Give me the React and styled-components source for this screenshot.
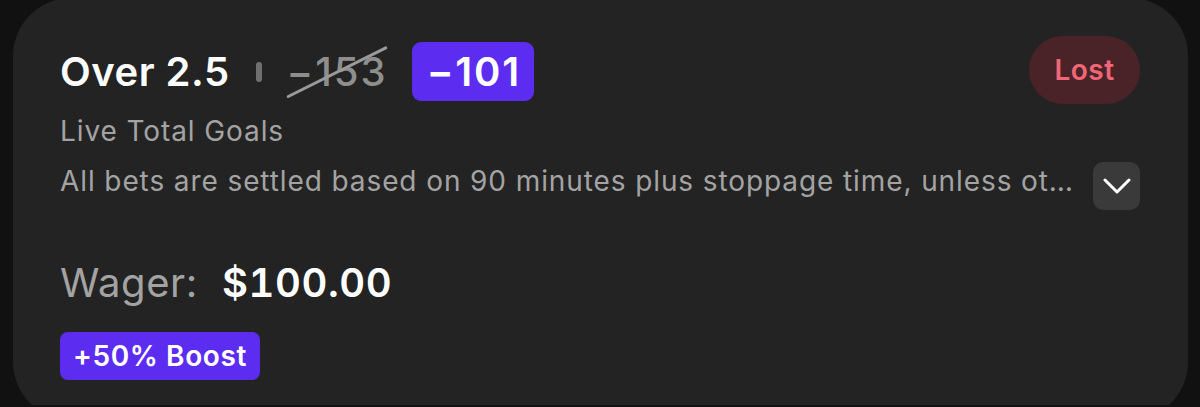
import React from 'react';
import styled, { createGlobalStyle } from 'styled-components';

const GlobalStyle = createGlobalStyle`
  html, body {
    margin: 0;
    padding: 0;
    background: #111111;
    overflow: hidden;
  }
  body {
    font-family: Inter, 'Noto Sans', sans-serif;
    -webkit-font-smoothing: antialiased;
  }
`;

const Page = styled.div`
  height: 407px;
  padding: 0 12px 0 13px;
`;

const Card = styled.div`
  box-sizing: border-box;
  margin-top: -2px;
  height: 422px;
  background: #232323;
  border-radius: 58px;
  padding: 38px 48px 0 47px;
  display: flex;
  flex-direction: column;
`;

const Header = styled.div`
  display: flex;
  justify-content: space-between;
  align-items: flex-start;
`;

const TitleLine = styled.div`
  display: flex;
  align-items: center;
  margin-top: 6px;
  height: 59px;
`;

const Title = styled.span`
  font-size: 40px;
  font-weight: 600;
  letter-spacing: 0.5px;
  color: #ffffff;
  line-height: 59px;
`;

const Divider = styled.span`
  width: 6px;
  height: 20px;
  margin: 0 25px 0 26px;
  border-radius: 3px;
  background: #6f6f6f;
`;

const OldOdds = styled.span`
  position: relative;
  margin-right: 24px;
  font-size: 40px;
  font-weight: 500;
  letter-spacing: 2px;
  color: #8e8e8e;
  line-height: 59px;

  &::after {
    content: '';
    position: absolute;
    left: 50%;
    top: 50%;
    width: 112px;
    height: 3px;
    border-radius: 2px;
    background: #9a9a9a;
    transform: translate(-50%, -45%) rotate(-26.5deg);
  }
`;

const OddsBadge = styled.span`
  display: inline-block;
  height: 59px;
  padding: 0 13px 0 15px;
  border-radius: 9px;
  background: #5c2cf0;
  color: #ffffff;
  font-size: 40px;
  font-weight: 600;
  letter-spacing: 1.8px;
  line-height: 59px;
`;

const StatusPill = styled.span`
  display: flex;
  align-items: center;
  justify-content: center;
  width: 111px;
  height: 68px;
  border-radius: 34px;
  background: ${(p) => (p.$lost ? '#4a2328' : '#1f3d2a')};
  color: ${(p) => (p.$lost ? '#ef6677' : '#4ade80')};
  font-size: 28px;
  font-weight: 600;
  letter-spacing: 0.5px;
`;

const Market = styled.div`
  margin-top: 10px;
  font-size: 28px;
  letter-spacing: 0.9px;
  line-height: 34px;
  color: #a3a3a3;
`;

const RulesRow = styled.div`
  display: flex;
  align-items: flex-start;
  gap: 16px;
  margin-top: 14px;
`;

const Rules = styled.div`
  flex: 1;
  min-width: 0;
  margin-top: 2px;
  font-size: 28px;
  letter-spacing: 0.9px;
  line-height: 34px;
  color: #a3a3a3;
  white-space: nowrap;
  overflow: hidden;
  text-overflow: ellipsis;
`;

const ExpandButton = styled.button`
  flex: none;
  width: 47px;
  height: 48px;
  border: none;
  border-radius: 10px;
  background: #3a3a3a;
  display: flex;
  align-items: center;
  justify-content: center;
  padding: 0;
`;

const WagerLine = styled.div`
  display: flex;
  align-items: baseline;
  gap: 24px;
  margin-top: 49px;
  font-size: 40px;
  line-height: 48px;
`;

const WagerLabel = styled.span`
  color: #a3a3a3;
  font-weight: 400;
  letter-spacing: 0.6px;
`;

const WagerAmount = styled.span`
  color: #ffffff;
  font-weight: 600;
  font-variant-numeric: tabular-nums;
  letter-spacing: 0.6px;
`;

const BoostTag = styled.span`
  align-self: flex-start;
  margin-top: 25px;
  height: 48px;
  padding: 0 13px;
  border-radius: 8px;
  background: #5c2cf0;
  color: #ffffff;
  font-size: 28px;
  font-weight: 600;
  letter-spacing: 0.6px;
  line-height: 48px;
`;

const Chevron = () => (
  <svg width="28" height="16" viewBox="0 0 28 16" fill="none">
    <path
      d="M2 2 L14 14 L26 2"
      stroke="#ffffff"
      strokeWidth="3"
      strokeLinecap="round"
      strokeLinejoin="round"
    />
  </svg>
);

const bet = {
  selection: 'Over 2.5',
  oldOdds: '\u2212153',
  odds: '\u2212101',
  market: 'Live Total Goals',
  rules:
    'All bets are settled based on 90 minutes plus stoppage time, unless otherwise stated.',
  wager: '$100.00',
  boost: '+50% Boost',
  status: 'Lost',
};

export default function App() {
  return (
    <>
      <GlobalStyle />
      <Page>
        <Card>
          <Header>
            <TitleLine>
              <Title>{bet.selection}</Title>
              <Divider />
              <OldOdds>{bet.oldOdds}</OldOdds>
              <OddsBadge>{bet.odds}</OddsBadge>
            </TitleLine>
            <StatusPill $lost={bet.status === 'Lost'}>{bet.status}</StatusPill>
          </Header>
          <Market>{bet.market}</Market>
          <RulesRow>
            <Rules>{bet.rules}</Rules>
            <ExpandButton aria-label="Expand">
              <Chevron />
            </ExpandButton>
          </RulesRow>
          <WagerLine>
            <WagerLabel>Wager:</WagerLabel>
            <WagerAmount>{bet.wager}</WagerAmount>
          </WagerLine>
          <BoostTag>{bet.boost}</BoostTag>
        </Card>
      </Page>
    </>
  );
}
